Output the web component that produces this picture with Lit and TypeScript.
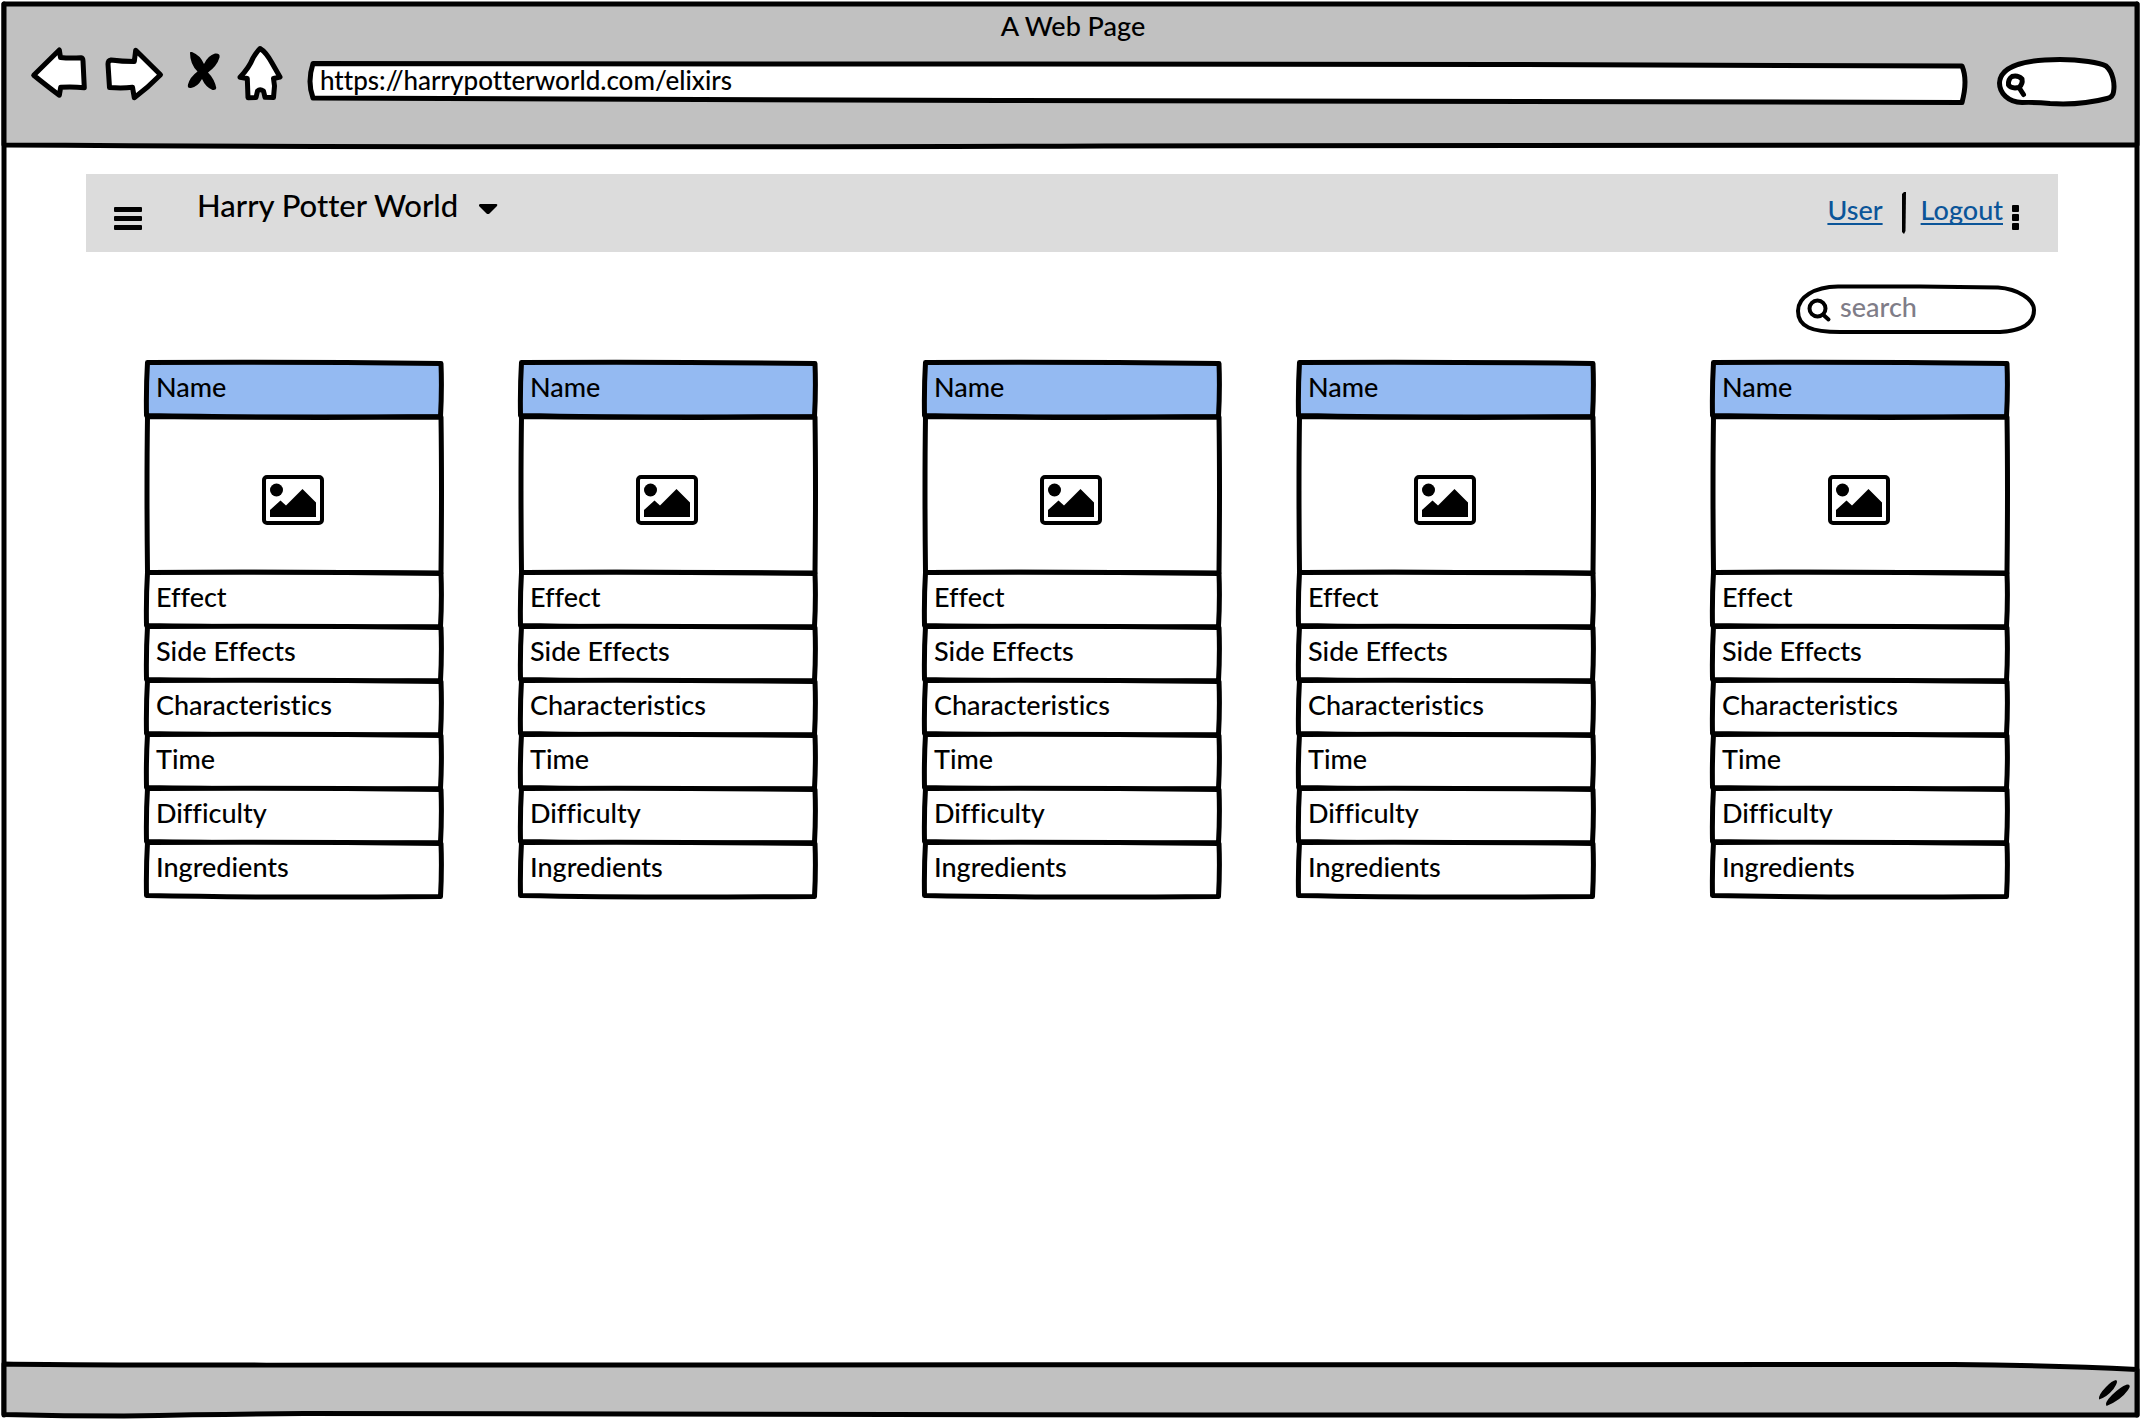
import { LitElement, html, css, svg } from "lit";
import { customElement, property } from "lit/decorators.js";

const FIELDS = ["Effect", "Side Effects", "Characteristics", "Time", "Difficulty", "Ingredients"];

const base = css`
  * {
    box-sizing: border-box;
  }
  svg {
    display: block;
    overflow: visible;
    fill: none;
    stroke: #000;
    stroke-width: 5px;
    stroke-linejoin: round;
    stroke-linecap: round;
  }
  .thin {
    stroke-width: 4px;
  }
  .solid {
    fill: #000;
    stroke: none;
  }
  .paper {
    fill: #fff;
  }
  .outline {
    position: absolute;
    inset: 0;
    width: 100%;
    height: 100%;
    z-index: -1;
  }
  .outline path {
    vector-effect: non-scaling-stroke;
  }
  .sketched {
    position: relative;
    z-index: 0;
  }
`;

/* One elixir: a tinted name row, a picture row and the list of fields. */
@customElement("elixir-card")
export class ElixirCard extends LitElement {
  @property() name = "Name";

  static styles = [
    base,
    css`
      :host {
        display: block;
        min-width: 0;
      }
      .row {
        margin: 0;
        height: 54px;
        padding-left: 9px;
        font-size: 27px;
        font-weight: 500;
        line-height: 48px;
        white-space: nowrap;
      }
      .fields {
        margin: 0;
        padding: 0;
        list-style: none;
      }
      .head {
        --fill: #94baf2;
      }
      .outline {
        fill: var(--fill, #fff);
      }
      .picture {
        display: grid;
        place-content: center;
        height: 156px;
        padding: 10px 2px 0 0;
      }
    `,
  ];

  private outline() {
    return html`<svg class="outline" viewBox="0 0 294 54" preserveAspectRatio="none" aria-hidden="true">
      <path d="M0.5 -0.5 Q140 -1.5 294 0.5 Q295 27 293.5 53.5 Q120 55 -0.5 52.5 Q-1 24 0.5 -0.5 Z" />
    </svg>`;
  }

  render() {
    return html`
      <article>
        <h2 class="row head sketched">${this.outline()}${this.name}</h2>
        <div class="picture sketched">
          <svg class="outline" viewBox="0 0 294 156" preserveAspectRatio="none" aria-hidden="true">
            <path d="M0.500 -0.500Q140 1 294 0Q295 70 294 156Q140 155 0.500 155.500Q-0.500 70 0.500 -0.500Z" />
          </svg>
          <svg width="62" height="50" viewBox="0 0 62 50" role="img" aria-label="Picture">
            <rect class="thin" x="2" y="2" width="58" height="46" rx="3" />
            <circle class="solid" cx="14.5" cy="15" r="6.5" />
            <path class="solid" d="M8 42V35L18.500 25.500L24 30.500L40.500 14L54 27.500V42Z" />
          </svg>
        </div>
        <ul class="fields">
          ${FIELDS.map((f) => html`<li class="row sketched">${this.outline()}${f}</li>`)}
        </ul>
      </article>
    `;
  }
}

@customElement("app-root")
export class AppRoot extends LitElement {
  static styles = [
    base,
    css`
      :host {
        display: block;
        box-sizing: border-box;
        min-height: 100vh;
        padding: 4px 5px 5px 4px;
        background: #fff;
        color: #000;
        font-family: Lato, "Open Sans", sans-serif;
        font-size: 27px;
        font-weight: 500;
        font-variant-ligatures: none;
      }
      button,
      input {
        margin: 0;
        padding: 0;
        border: 0;
        background: none;
        color: inherit;
        font: inherit;
        outline: none;
      }
      button {
        cursor: pointer;
      }
      label {
        display: block;
      }
      .window {
        display: flex;
        flex-direction: column;
        min-height: calc(100vh - 9px);
      }
      .chrome {
        height: 141px;
        padding: 6px 19px 0 24px;
      }
      .chrome > .outline,
      .status > .outline {
        fill: #c1c1c1;
      }
      .title {
        margin: 0;
        font-size: 27px;
        font-weight: 500;
        line-height: 32px;
        text-align: center;
      }
      .toolbar {
        display: flex;
        gap: 8px;
      }
      .address {
        flex: 1;
        min-width: 0;
        height: 64px;
        padding: 12px 14px 0 14px;
      }
      .address input {
        display: block;
        width: 100%;
        height: 52px;
        font-size: 26px;
      }
      .find {
        width: 140px;
        height: 64px;
        padding: 20px 12px 8px 56px;
      }
      .find input {
        display: block;
        width: 100%;
        height: 36px;
      }
      .page {
        flex: 1;
      }
      .navbar {
        display: flex;
        align-items: flex-start;
        height: 78px;
        margin: 29px 79px 0 82px;
        padding: 12px 31px 0 20px;
        background: #dcdcdc;
      }
      .brand {
        display: flex;
        gap: 14px;
        height: 38px;
        margin: 0 auto 0 47px;
        font-size: 31px;
        line-height: 38px;
        white-space: nowrap;
      }
      .link {
        color: #0b5599;
        line-height: 48px;
        text-decoration: underline;
        text-decoration-thickness: 2px;
        text-underline-offset: 3px;
        text-decoration-skip-ink: none;
      }
      .search {
        width: 244px;
        height: 54px;
        margin: 30px 99px 27px auto;
        padding: 0 24px 6px 46px;
      }
      .search input {
        display: block;
        width: 100%;
        height: 48px;
      }
      .search input::placeholder {
        color: #7f7d88;
        opacity: 1;
      }
      .cards {
        display: grid;
        grid-template-columns: 294fr 80fr 294fr 110fr 294fr 80fr 294fr 120fr 294fr;
        margin: 0 130px 40px 143px;
      }
      .cards elixir-card:nth-child(2) {
        grid-column: 3;
      }
      .cards elixir-card:nth-child(3) {
        grid-column: 5;
      }
      .cards elixir-card:nth-child(4) {
        grid-column: 7;
      }
      .cards elixir-card:nth-child(5) {
        grid-column: 9;
      }
      .status {
        display: flex;
        justify-content: flex-end;
        height: 51px;
        padding: 14px 5px 0 0;
      }
    `,
  ];

  private tool(label: string, x: number, w: number, shape: unknown) {
    return html`<button aria-label=${label}>
      <svg width=${w} height="64" viewBox="${x} 42 ${w} 64" aria-hidden="true">${shape}</svg>
    </button>`;
  }

  render() {
    return html`
      <div class="window sketched">
        <svg class="outline" viewBox="0 0 100 100" preserveAspectRatio="none" aria-hidden="true">
          <path d="M0 0V100M100 0V100" />
        </svg>
        <header class="chrome sketched">
          <svg class="outline" viewBox="0 0 2133 141" preserveAspectRatio="none" aria-hidden="true">
            <path d="M0 0H2133V141Q1500 141 1100 142Q500 144 0 141Z" />
          </svg>
          <h1 class="title">A Web Page</h1>
          <div class="toolbar">
            ${this.tool("Back", 28, 64, svg`<path class="paper" d="M33.700 75.300L59.300 50L60.500 57.500Q70 58.500 81 57.700Q83 58 83 61L84.300 87.700Q72 86.500 60.700 87.300L59.300 95.300Q45 84.500 33.700 75.300Z" />`)}
            ${this.tool("Forward", 100, 72, svg`<path class="paper" d="M160.500 74.700L135.700 50.300L134.300 61.500Q122 61.500 111 60Q108 60.500 108 64L109.500 87.500Q122 88.500 132.500 87.300L134.300 97.700Q148 87.500 160.500 74.700Z" />`)}
            ${this.tool("Stop", 180, 46, svg`<path class="solid" d="M190 53Q189.500 51.500 192 52Q200 55 204 64Q208 55.500 215 53.500Q220.500 53 219.500 57.500Q217 66 208 72.500Q214.500 79 216.300 88Q216 90.500 212.500 90Q205.500 87 202 79Q197.500 87 191 88Q187 88.500 188 84.500Q190 77 197.500 71.500Q190 64 190 53Z" />`)}
            ${this.tool("Home", 234, 64, svg`<path class="paper" d="M260 48.500Q266 52 272 63L280 77L273.500 78.500L274.500 86L273.500 97.500L265 97.300L263.500 91Q260 88.500 257.500 91L256 97.500L248 97.700L247.300 78.500L240 77.200Q249 68 253 58Q257 51.500 260 48.500Z" />`)}
            <label class="address sketched">
              <svg class="outline" viewBox="306 42 1664 64" preserveAspectRatio="none" aria-hidden="true">
                <path class="paper" d="M313 63.500Q1000 62.500 1500 64.500Q1800 65.500 1962 66Q1968 80 1962 102.500Q1500 103.500 1000 100.500Q600 98 313 98Q307 82 313 63.500Z" />
              </svg>
              <input type="text" aria-label="Address" .value=${"https://harrypotterworld.com/elixirs"} />
            </label>
            <label class="find sketched">
              <svg class="outline" viewBox="1978 42 140 64" aria-hidden="true">
                <path class="paper" d="M2022 102.500C2008 102 1999.500 93 1999.500 83C2000 66 2025 59.500 2060 59.500C2080 59.500 2100 62.500 2106 66C2113 72 2115 84 2113.500 92Q2113 97 2107 98.500C2090 103 2075 105 2050 103.500Q2035 102 2022 102.500Z" />
                <path d="M2019 87.500Q2023 84 2022 79Q2018 75 2012 76.500Q2008 79 2008.500 85Q2011 89 2019 87.500L2023.500 94.500" />
              </svg>
              <input type="text" aria-label="Web search" />
            </label>
          </div>
        </header>

        <main class="page">
          <nav class="navbar">
            <button aria-label="Menu">
              <svg width="44" height="54" viewBox="106 186 44 54" aria-hidden="true">
                <g class="solid">
                  <rect x="114" y="207" width="28" height="5" rx="1" />
                  <rect x="114" y="216" width="28" height="5" rx="1" />
                  <rect x="114" y="225" width="28" height="5" rx="1" />
                </g>
              </svg>
            </button>
            <button class="brand">
              Harry Potter World
              <svg width="32" height="38" viewBox="472 186 32 38" aria-hidden="true">
                <path class="solid" d="M480 204H496.500Q498 204.500 497 206L489.500 213.500Q488 214.500 486.500 213.500L479 206Q478.500 204.500 480 204Z" />
              </svg>
            </button>
            <a class="link" href="#user">User</a>
            <svg width="38" height="54" viewBox="1883 186 38 54" aria-hidden="true">
              <path class="solid" d="M1902 194L1904 192H1906L1905.500 231L1904 234L1902 232Z" />
            </svg>
            <a class="link" href="#logout">Logout</a>
            <button aria-label="More">
              <svg width="24" height="54" viewBox="2003 186 24 54" aria-hidden="true">
                <g class="solid">
                  <rect x="2012" y="205" width="7" height="7" rx="1" />
                  <rect x="2012" y="214" width="7" height="7" rx="1" />
                  <rect x="2012" y="223" width="7" height="7" rx="1" />
                </g>
              </svg>
            </button>
          </nav>

          <label class="search sketched">
            <svg class="outline thin" viewBox="1794 282 244 54" aria-hidden="true">
              <path class="paper" d="M1838 286.500L1920 286.500L1998 287.500C2018 289 2034 299 2034 310C2034 326 2018 331 2000 332L1840 332C1812 332 1798 327 1798 311C1798 297 1814 287 1838 286.500Z" />
              <circle cx="1817.500" cy="308.500" r="8" />
              <path d="M1823.500 315L1828.500 319.500" />
            </svg>
            <input type="text" placeholder="search" aria-label="Search elixirs" />
          </label>

          <section class="cards" aria-label="Elixirs">
            ${Array.from({ length: 5 }, () => html`<elixir-card name="Name"></elixir-card>`)}
          </section>
        </main>

        <footer class="status sketched">
          <svg class="outline" viewBox="0 0 2133 51" preserveAspectRatio="none" aria-hidden="true">
            <path d="M0 0Q100 1.500 400 1L1950 0.500Q2050 1.500 2133 5.500V51L1200 51Q900 49.500 300 49.500Q220 50 120 52Q60 52 0 50.500Z" />
          </svg>
          <svg width="34" height="30" viewBox="2098 1380 34 30" aria-hidden="true">
            <path class="solid" d="M2099 1401.500Q2098 1397 2106 1389Q2112 1382.500 2116 1382Q2119 1383 2113.500 1391Q2107 1399 2099 1401.500ZM2106.500 1408Q2104 1405 2112 1397Q2120 1389 2127 1386.500Q2132 1386.500 2128 1392Q2121 1402 2106.500 1408Z" />
          </svg>
        </footer>
      </div>
    `;
  }
}
